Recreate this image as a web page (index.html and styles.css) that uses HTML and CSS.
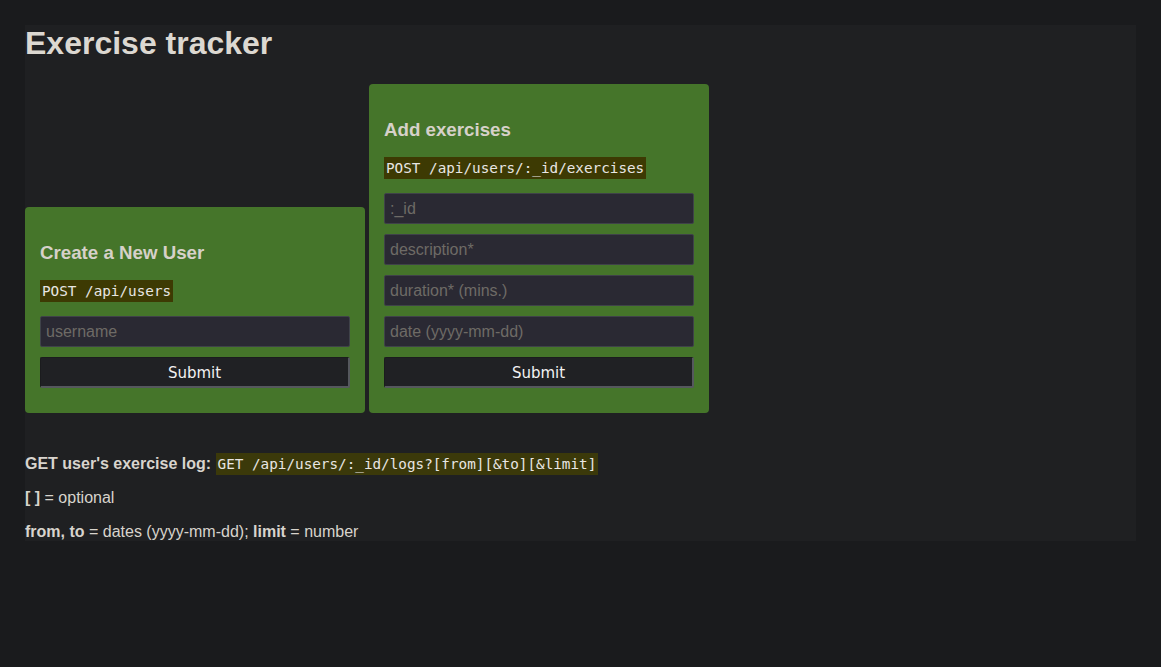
FILE: index.html
```html
<!DOCTYPE html>
<html>
<head>
<meta charset="utf-8">
<title>Exercise Tracker</title>
<link rel="stylesheet" href="styles.css">
</head>
<body>
<div class="container">
  <h1 class="title">Exercise tracker</h1>
  <div class="forms">
    <form class="card">
      <h3 class="card-title">Create a New User</h3>
      <p class="endpoint"><code class="code">POST /api/users</code></p>
      <input class="field" type="text" placeholder="username">
      <button class="submit" type="button">Submit</button>
    </form>
    <form class="card">
      <h3 class="card-title">Add exercises</h3>
      <p class="endpoint"><code class="code">POST /api/users/:_id/exercises</code></p>
      <input class="field" type="text" placeholder=":_id">
      <input class="field" type="text" placeholder="description*">
      <input class="field" type="text" placeholder="duration* (mins.)">
      <input class="field" type="text" placeholder="date (yyyy-mm-dd)">
      <button class="submit" type="button">Submit</button>
    </form>
  </div>
  <p class="note first"><strong>GET user's exercise log:</strong> <code class="code log">GET /api/users/:_id/logs?[from][&amp;to][&amp;limit]</code></p>
  <p class="note"><strong>[ ]</strong> = optional</p>
  <p class="note last"><strong>from, to</strong> = dates (yyyy-mm-dd); <strong>limit</strong> = number</p>
</div>
</body>
</html>
```
FILE: styles.css
```css
html, body {
  margin: 0;
  padding: 0;
}
body {
  background: #1a1b1d;
  font-family: "Liberation Sans", Arial, sans-serif;
  color: #d8d4cd;
  padding: 25px;
}
.container {
  background: #1f2022;
  display: flow-root;
}
.title {
  font-size: 32px;
  line-height: 37px;
  margin: 0;
  font-weight: bold;
  color: #dcd8d1;
}
.forms {
  display: flex;
  align-items: flex-end;
  gap: 4px;
  margin-top: 22px;
  margin-bottom: 42px;
}
.card {
  width: 340px;
  box-sizing: border-box;
  background: #45752a;
  border-radius: 4px;
  padding: 15px 15px 25px;
}
.card-title {
  font-size: 18.72px;
  line-height: 22px;
  margin: 20px 0 16px;
  color: #d6d1c9;
}
.endpoint {
  margin: 0 0 14px;
  line-height: 22px;
  height: 22px;
}
.code {
  font-family: "DejaVu Sans Mono", "Liberation Mono", monospace;
  font-size: 14.3px;
  line-height: 18px;
  display: inline-block;
  padding: 2px;
  background: #3d3a03;
  color: #e8e6e3;
}
.field {
  display: block;
  width: 100%;
  box-sizing: border-box;
  height: 31px;
  margin: 0 0 10px;
  padding: 0 5px;
  background: #2a2933;
  border: 1px solid #3f4249;
  border-radius: 2px;
  font-family: "Liberation Sans", Arial, sans-serif;
  font-size: 16px;
  color: #d8d4cd;
  outline: none;
}
.field::placeholder {
  color: #6e6b66;
}
.submit {
  display: block;
  width: 100%;
  height: 31px;
  box-sizing: border-box;
  background: #202124;
  color: #f2f2f2;
  border-style: solid;
  border-width: 1px 2px 2px 1px;
  border-color: #1b1c1e #55585d #55585d #1b1c1e;
  border-radius: 2px;
  font-family: "DejaVu Sans", Tahoma, sans-serif;
  font-size: 15px;
  padding: 2px 0 0;
}
.note {
  font-size: 16px;
  line-height: 18px;
  margin: 16px 0 0;
  color: #d8d4cd;
}
.note.first {
  margin-top: 0;
}
.note strong {
  color: #d8d4cd;
}
.code.log {
  display: inline;
  padding: 3px 2px;
  background: #3b390a;
}
```
